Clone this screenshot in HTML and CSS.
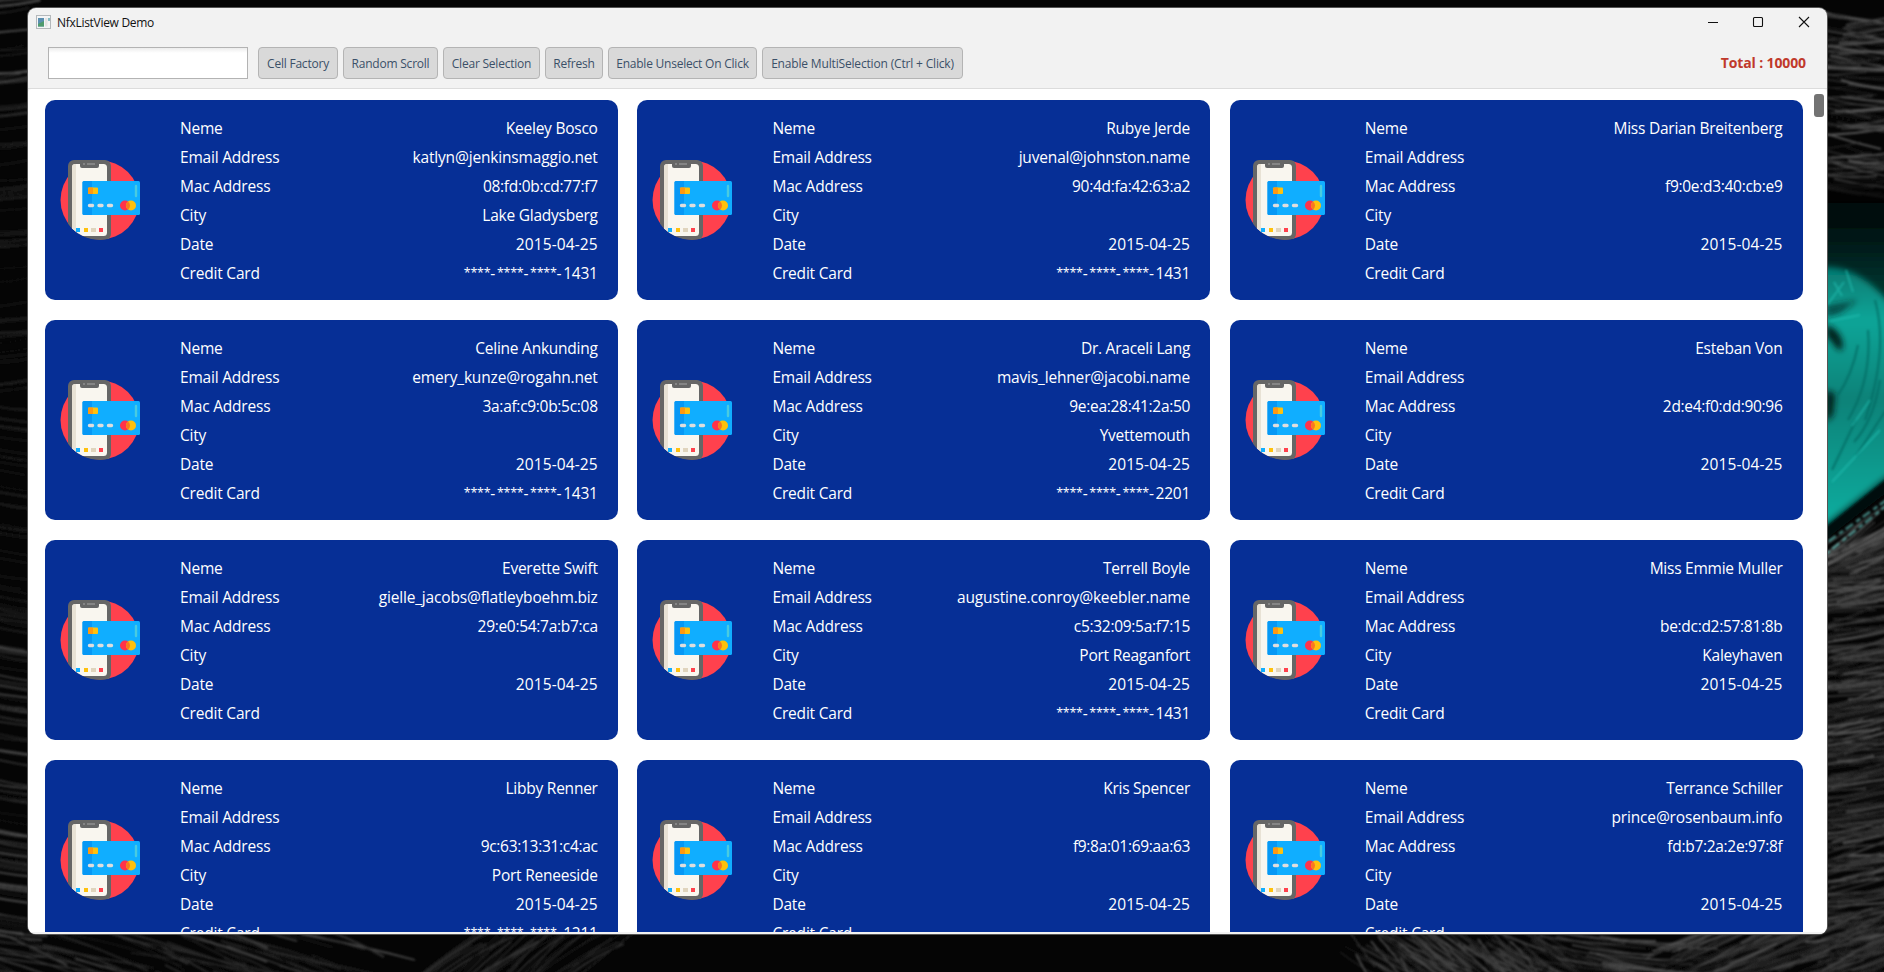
FILE: index.html
```html
<!DOCTYPE html>
<html lang="en">
<head>
<meta charset="utf-8">
<title>NfxListView Demo</title>
<link rel="stylesheet" href="styles.css">
</head>
<body>
<svg class="wallpaper" viewBox="0 0 1884 972" aria-hidden="true">
  <defs>
    <linearGradient id="eye" x1="0" y1="0" x2="0" y2="1"><stop offset="0" stop-color="#067970"/><stop offset=".2" stop-color="#0aa598"/><stop offset=".5" stop-color="#078278"/><stop offset="1" stop-color="#0cb0a2"/></linearGradient>
    <linearGradient id="lid" x1="0" y1="0" x2="0" y2="1"><stop offset="0" stop-color="#050505" stop-opacity="0"/><stop offset=".12" stop-color="#030a0a"/><stop offset=".3" stop-color="#02302c"/><stop offset="1" stop-color="#03403b"/></linearGradient>
    <filter id="soft"><feGaussianBlur stdDeviation=".9"/></filter>
    <filter id="softer" x="-20%" y="-20%" width="140%" height="140%"><feGaussianBlur stdDeviation="3"/></filter>
  </defs>
  <rect width="1884" height="972" fill="#050505"/>
  <g id="fur" fill="none" filter="url(#soft)"></g>
  <path d="M1815 170H1895V480L1815 540Z" fill="url(#lid)" filter="url(#softer)"/>
  <path d="M1815 268C1850 262 1878 285 1905 322V462L1815 532Z" fill="url(#eye)" filter="url(#softer)"/>
  <g filter="url(#softer)" fill="#021a19">
    <path d="M1826 306L1858 300L1840 313L1826 317Z" opacity=".65"/>
    <path d="M1826 325C1838 328 1845 341 1842 350C1836 352 1833 340 1826 336Z"/>
    <path d="M1826 390L1835 394L1833 415L1826 422Z"/>
  </g>
  <g filter="url(#soft)" fill="none" stroke="#04665f" stroke-width="2" opacity=".7"><path d="M1875 300q14 50-10 120M1868 330q4 50-20 90M1880 380q-6 40-26 62M1858 345q-6 30-20 50M1856 420l-24 50M1886 410l-30 46"/></g>
  <g filter="url(#soft)" fill="none" stroke="#20beb1" stroke-width="2" opacity=".6"><path d="M1828 304l16-22M1830 321l30-6M1834 282l8 14M1846 270l7 22M1880 430l-48 52M1870 400l-18 26"/></g>
  <path d="M1815 536L1895 472V486L1815 548Z" fill="#020b0a" filter="url(#soft)"/>
  <path d="M1822 546L1888 499M1826 554L1886 506" stroke="#63c6bf" stroke-width="2.500" stroke-dasharray="5 3 9 4" opacity=".65" filter="url(#soft)"/>
</svg>
<main class="window">
  <header class="titlebar">
    <svg class="app-icon" width="15" height="14" viewBox="0 0 15 14"><rect x=".5" y=".5" width="14" height="13" fill="#f4f5f6" stroke="#b4b8bb"/><rect x="2" y="3" width="6" height="8.500" fill="#5b8fb0"/><path d="M2 11.500V9L8 6v5.500Z" fill="#4f9b6d"/><rect x="9" y="3" width="2.500" height="8.500" fill="#e3e3e3"/><rect x="12" y="3" width="2" height="3" fill="#86bdc4"/></svg>
    <span class="title">NfxListView Demo</span>
    <svg class="controls" width="110" height="14" viewBox="0 0 110 14" fill="none" stroke="#111" stroke-width="1.100"><path d="M1 7.500h10"/><rect x="46.500" y="2.500" width="9" height="9" rx="1"/><path d="M92 2l10 10M102 2L92 12"/></svg>
  </header>
  <div class="toolbar">
    <input class="search" type="text" aria-label="Search">
    <div class="buttons">
      <button class="btn b1">Cell Factory</button>
      <button class="btn b2">Random Scroll</button>
      <button class="btn b3">Clear Selection</button>
      <button class="btn b4">Refresh</button>
      <button class="btn b5">Enable Unselect On Click</button>
      <button class="btn b6">Enable MultiSelection (Ctrl + Click)</button>
    </div>
    <span class="total">Total : 10000</span>
  </div>
  <section class="viewport">
    <div class="grid" id="grid"></div>
    <div class="thumb"></div>
  </section>
</main>
<svg class="symbols" aria-hidden="true">
  <symbol id="pay" viewBox="0 0 80 80">
    <clipPath id="disc"><path d="M0 0H80V40A40 40 0 0 1 0 40Z"/></clipPath>
    <circle cx="40" cy="40" r="39.500" fill="#ff414d"/>
    <g clip-path="url(#disc)">
      <rect x="8" y="0" width="43" height="80" rx="6" fill="#666"/>
      <rect x="12" y="4" width="35" height="72" rx="3.500" fill="#f9f6ef"/>
      <path d="M12 7q0-3 3-3h1v72h-1q-3 0-3-3Z" fill="#e8e2d5"/>
      <path d="M20 3H39V6q0 2-2 2H22q-2 0-2-2Z" fill="#666"/>
      <path d="M23 4h2M27 4h8" stroke="#858585" stroke-width="2"/>
      <rect x="16" y="68" width="4" height="4" fill="#10aeff"/><rect x="24" y="68" width="4" height="4" fill="#ffc10d"/><rect x="31" y="68" width="5" height="4" fill="#e0d4bd"/><rect x="39" y="68" width="4" height="4" fill="#ff414d"/>
    </g>
    <rect x="22.500" y="21" width="57.500" height="34" rx="1.500" fill="#10aeff"/>
    <path d="M24 21h8v34h-8q-1.500 0-1.500-1.500v-31Q22.500 21 24 21Z" fill="#0798f5"/>
    <rect x="28" y="27.500" width="10" height="6.500" rx="1" fill="#ffc10d"/><path d="M29 27.500h4V34h-4q-1 0-1-1v-4.500q0-1 1-1" fill="#ff9811"/>
    <path d="M29.500 45.500h3M39 45.500h3M48.500 45.500h3" stroke="#dedede" stroke-width="3.400" stroke-linecap="round"/>
    <circle cx="65" cy="45.500" r="5" fill="#ff334b"/><circle cx="71" cy="45.500" r="5" fill="#ffc10d"/><path d="M68 41.500a5 5 0 0 1 0 8a5 5 0 0 1 0-8" fill="#f97721"/>
    <path d="M76 26v10" stroke="#49cbe0" stroke-width="2.400" stroke-linecap="round"/>
  </symbol>
</svg>
<script src="app.js"></script>
</body>
</html>
```
FILE: styles.css
```css
* { box-sizing: border-box; }
body { margin: 0; width: 1884px; height: 972px; overflow: hidden; background: #050505; font-family: "Open Sans", "Noto Sans", sans-serif; padding: 8px 0 0 28px; }
.wallpaper { position: absolute; left: 0; top: 0; width: 1884px; height: 972px; }
.symbols { position: absolute; width: 0; height: 0; }
.window { position: relative; width: 1799px; height: 926px; background: #f2f2f2; border-radius: 8px; overflow: hidden; display: flex; flex-direction: column; box-shadow: 0 0 0 1px #555; }
.titlebar { height: 28px; display: flex; align-items: center; padding: 0 10px 0 8px; color: #111; font-size: 12px; }
.title { margin-left: 6px; letter-spacing: -.3px; padding-top: 1px; }
.controls { margin-left: auto; }
.toolbar { height: 53px; display: flex; align-items: center; padding: 3px 21px 2px 20px; border-bottom: 1px solid #dcdcdc; }
.search { width: 200px; height: 32px; border: 1px solid #b3b3b3; background: linear-gradient(#ededed, #fff 5px); padding: 4px; }
.buttons { display: flex; gap: 5px; margin-left: 10px; }
.btn { height: 32px; padding: 2px 0 0; border: 1px solid #b4b4b4; border-radius: 4px; background: #d9d9d9; color: #3b5068; font: 12px "Open Sans", sans-serif; letter-spacing: -.22px; white-space: nowrap; }
.b1 { width: 80px; }
.b2 { width: 95px; }
.b3 { width: 97px; }
.b4 { width: 58px; }
.b5 { width: 149px; }
.b6 { width: 201px; letter-spacing: -.17px; }
.total { margin-left: auto; color: #c0392b; font-weight: 700; font-size: 14px; letter-spacing: -.12px; }
.viewport { flex: 1; position: relative; background: #fff; border-radius: 4px 4px 0 0; overflow: hidden; border-bottom: 2px solid #f2f2f2; }
.grid { display: grid; grid-template-columns: repeat(3, 573px); column-gap: 19.4px; row-gap: 20px; grid-auto-rows: 200px; padding: 11px 0 0 17px; }
.thumb { position: absolute; right: 3px; top: 5px; width: 10px; height: 23px; border-radius: 3px; background: #737373; }
.card { background: #062f96; border-radius: 10px; display: flex; align-items: center; padding: 0 20px 0 15px; color: #fff; }
.icon { width: 80px; height: 80px; flex: none; }
.fields { flex: 1; margin: 0 0 0 40px; font-size: 15.5px; letter-spacing: -.2px; }
.row { height: 29px; display: flex; justify-content: space-between; align-items: center; white-space: nowrap; }
.value { margin-right: .3px; letter-spacing: -.24px; }
.email { letter-spacing: -.17px; }
.mac { letter-spacing: -.3px; }
.date { letter-spacing: .1px; }
.mask { letter-spacing: 1.6px; }
.stars { font-size: 12.5px; line-height: 1; letter-spacing: -.25px; vertical-align: 2px; }
```
FILE: app.js
```js
const labels = ["Neme", "Email Address", "Mac Address", "City", "Date", "Credit Card"];
const kinds = ["name", "email", "mac", "city", "date", "credit"];
const S = '<span class="stars">****</span>-';
const D = "2015-04-25", C = `<span class="mask">${S}${S}${S}</span>`;
const people = [
  ["Keeley Bosco", "katlyn@jenkinsmaggio.net", "08:fd:0b:cd:77:f7", "Lake Gladysberg", D, C + "1431"],
  ["Rubye Jerde", "juvenal@johnston.name", "90:4d:fa:42:63:a2", "", D, C + "1431"],
  ["Miss Darian Breitenberg", "", "f9:0e:d3:40:cb:e9", "", D, ""],
  ["Celine Ankunding", "emery_kunze@rogahn.net", "3a:af:c9:0b:5c:08", "", D, C + "1431"],
  ["Dr. Araceli Lang", "mavis_lehner@jacobi.name", "9e:ea:28:41:2a:50", "Yvettemouth", D, C + "2201"],
  ["Esteban Von", "", "2d:e4:f0:dd:90:96", "", D, ""],
  ["Everette Swift", "gielle_jacobs@flatleyboehm.biz", "29:e0:54:7a:b7:ca", "", D, ""],
  ["Terrell Boyle", "augustine.conroy@keebler.name", "c5:32:09:5a:f7:15", "Port Reaganfort", D, C + "1431"],
  ["Miss Emmie Muller", "", "be:dc:d2:57:81:8b", "Kaleyhaven", D, ""],
  ["Libby Renner", "", "9c:63:13:31:c4:ac", "Port Reneeside", D, C + "1211"],
  ["Kris Spencer", "", "f9:8a:01:69:aa:63", "", D, ""],
  ["Terrance Schiller", "prince@rosenbaum.info", "fd:b7:2a:2e:97:8f", "", D, ""]
];
document.getElementById("grid").innerHTML = people.map(p =>
  `<article class="card"><svg class="icon"><use href="#pay"/></svg><div class="fields">${labels.map((l, i) =>
    `<div class="row"><span>${l}</span><span class="value ${kinds[i]}">${p[i]}</span></div>`).join("")}</div></article>`).join("");

// Fur strands along the visible edges of the desktop
let seed = 7;
const rnd = () => (seed = (seed * 16807) % 2147483647) / 2147483647;
let strands = "";
function strand(x, y, dx, dy, bend, light) {
  const g = Math.round(light);
  strands += `<path d="M${x.toFixed(0)} ${y.toFixed(0)}q${(dx / 2).toFixed(0)} ${(dy / 2 + bend).toFixed(0)} ${dx.toFixed(0)} ${dy.toFixed(0)}" stroke="rgb(${g},${g},${g})" stroke-width="${(0.6 + rnd() * 1.6).toFixed(1)}"/>`;
}
for (let i = 0; i < 170; i++) {
  const y = rnd() * 972;
  strand(-22 + rnd() * 20, y, 40 + rnd() * 30, y < 400 ? -6 : 8, rnd() * 4, 18 + rnd() * (y > 640 || y < 130 ? 62 : 20));
}
for (let i = 0; i < 95; i++) strand(1800 + rnd() * 50, rnd() * 190, 50 + rnd() * 40, rnd() * 30 - 12, rnd() * 5, 20 + rnd() * 70);
for (let i = 0; i < 340; i++) strand(1790 + rnd() * 60, 560 + rnd() * 420, 50 + rnd() * 50, -2 - rnd() * 20, rnd() * 5, 20 + rnd() * 65);
for (let i = 0; i < 40; i++) strand(1810 + rnd() * 50, 545 + rnd() * 30, 50 + rnd() * 30, -20 - rnd() * 25, rnd() * 4, 40 + rnd() * 70);
for (let i = 0; i < 70; i++) strand(rnd() * 380 - 60, 920 + rnd() * 55, 70 + rnd() * 60, 18 + rnd() * 26, -rnd() * 6, 18 + rnd() * 55);
for (let i = 0; i < 40; i++) strand(400 + rnd() * 200, 975, 40 + rnd() * 30, -30 - rnd() * 20, -rnd() * 6, 16 + rnd() * 40);
for (let i = 0; i < 130; i++) strand(1340 + rnd() * 200, 925 + rnd() * 35, 24 + rnd() * 40, 20 + rnd() * 26, rnd() * 4, 22 + rnd() * 60);
for (let i = 0; i < 120; i++) strand(1640 + rnd() * 220, 945 + rnd() * 40, 60 + rnd() * 40, -20 - rnd() * 26, rnd() * 4, 20 + rnd() * 55);
for (let i = 0; i < 24; i++) strand(1530 + rnd() * 90, 930 + rnd() * 40, 80 + rnd() * 40, 8 + rnd() * 12, 4, 20 + rnd() * 70);
document.getElementById("fur").innerHTML = strands;
```
